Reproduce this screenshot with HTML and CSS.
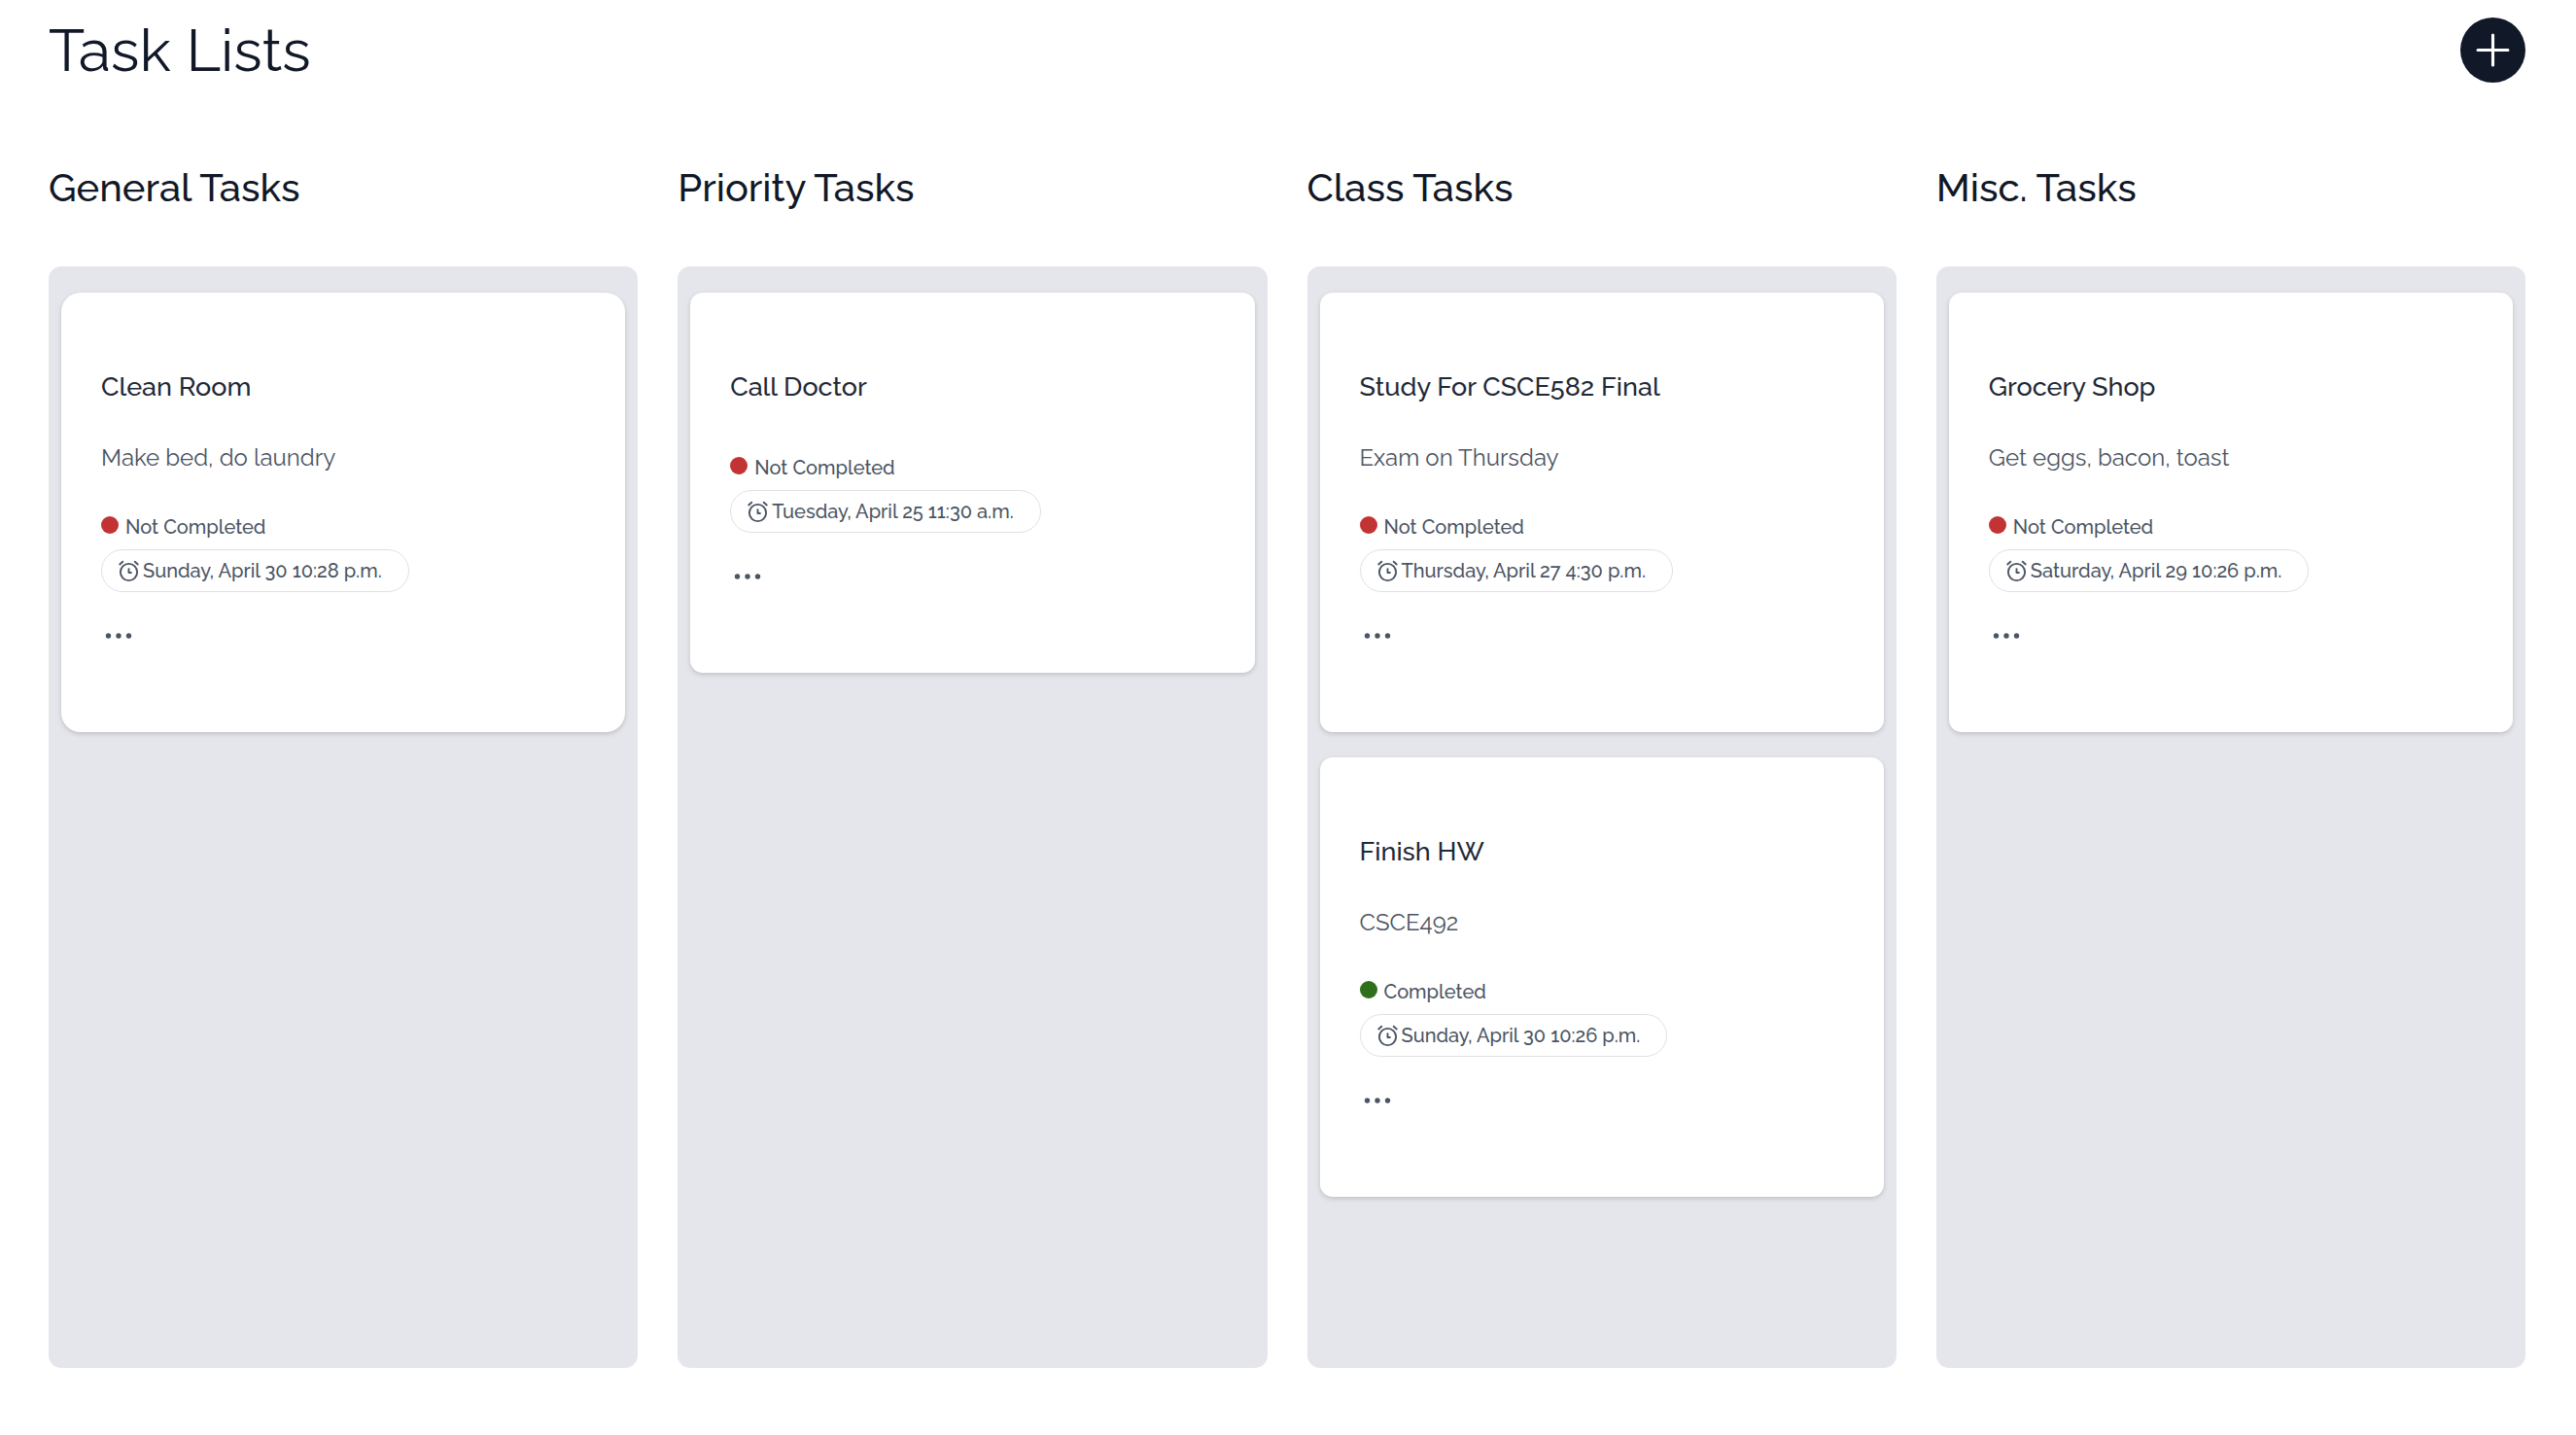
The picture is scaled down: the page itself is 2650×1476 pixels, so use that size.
FILE: index.html
```html
<!DOCTYPE html>
<html lang="en">
<head>
  <meta charset="utf-8">
  <meta name="viewport" content="width=device-width, initial-scale=1">
  <title>Task Lists</title>
  <link rel="stylesheet" href="styles.css">
</head>
<body>
  <svg class="sprite" aria-hidden="true">
    <symbol id="icon-alarm" viewBox="0 0 24 24">
      <g fill="none" stroke="currentColor" stroke-width="2" stroke-linecap="round" stroke-linejoin="round">
        <circle cx="12" cy="13" r="9"/>
        <path d="M12 9.500v4h2.500M2.300 4.600l3.200-2.800M21.700 4.600l-3.200-2.800"/>
      </g>
    </symbol>
    <symbol id="icon-dots" viewBox="0 0 36 36">
      <g fill="currentColor">
        <circle cx="7.500" cy="18" r="2.700"/>
        <circle cx="18" cy="18" r="2.700"/>
        <circle cx="28.500" cy="18" r="2.700"/>
      </g>
    </symbol>
  </svg>

  <header class="page-header">
    <h1 class="page-title">Task Lists</h1>
    <button class="add-button" type="button" aria-label="Add task">
      <svg class="add-icon" viewBox="0 0 34 34" aria-hidden="true"><path d="M17 2v30M2 17h30" fill="none" stroke="currentColor" stroke-width="3" stroke-linecap="round"/></svg>
    </button>
  </header>

  <main class="board">
    <section class="column">
      <h2 class="column-title">General Tasks</h2>
      <div class="list">
        <article class="card card-round">
          <h3 class="card-title">Clean Room</h3>
          <p class="card-text">Make bed, do laundry</p>
          <p class="status"><span class="dot dot-open"></span>Not Completed</p>
          <p class="due"><svg class="due-icon" aria-hidden="true"><use href="#icon-alarm"/></svg>Sunday, April 30 10:28 p.m.</p>
          <button class="more" type="button" aria-label="More options"><svg class="more-icon" aria-hidden="true"><use href="#icon-dots"/></svg></button>
        </article>
      </div>
    </section>

    <section class="column">
      <h2 class="column-title">Priority Tasks</h2>
      <div class="list">
        <article class="card">
          <h3 class="card-title">Call Doctor</h3>
          <p class="status"><span class="dot dot-open"></span>Not Completed</p>
          <p class="due"><svg class="due-icon" aria-hidden="true"><use href="#icon-alarm"/></svg>Tuesday, April 25 11:30 a.m.</p>
          <button class="more" type="button" aria-label="More options"><svg class="more-icon" aria-hidden="true"><use href="#icon-dots"/></svg></button>
        </article>
      </div>
    </section>

    <section class="column">
      <h2 class="column-title">Class Tasks</h2>
      <div class="list">
        <article class="card">
          <h3 class="card-title">Study For CSCE582 Final</h3>
          <p class="card-text">Exam on Thursday</p>
          <p class="status"><span class="dot dot-open"></span>Not Completed</p>
          <p class="due"><svg class="due-icon" aria-hidden="true"><use href="#icon-alarm"/></svg>Thursday, April 27 4:30 p.m.</p>
          <button class="more" type="button" aria-label="More options"><svg class="more-icon" aria-hidden="true"><use href="#icon-dots"/></svg></button>
        </article>
        <article class="card">
          <h3 class="card-title">Finish HW</h3>
          <p class="card-text">CSCE492</p>
          <p class="status"><span class="dot dot-done"></span>Completed</p>
          <p class="due"><svg class="due-icon" aria-hidden="true"><use href="#icon-alarm"/></svg>Sunday, April 30 10:26 p.m.</p>
          <button class="more" type="button" aria-label="More options"><svg class="more-icon" aria-hidden="true"><use href="#icon-dots"/></svg></button>
        </article>
      </div>
    </section>

    <section class="column">
      <h2 class="column-title">Misc. Tasks</h2>
      <div class="list">
        <article class="card">
          <h3 class="card-title">Grocery Shop</h3>
          <p class="card-text">Get eggs, bacon, toast</p>
          <p class="status"><span class="dot dot-open"></span>Not Completed</p>
          <p class="due"><svg class="due-icon" aria-hidden="true"><use href="#icon-alarm"/></svg>Saturday, April 29 10:26 p.m.</p>
          <button class="more" type="button" aria-label="More options"><svg class="more-icon" aria-hidden="true"><use href="#icon-dots"/></svg></button>
        </article>
      </div>
    </section>
  </main>
</body>
</html>
```
FILE: styles.css
```css
* {
  box-sizing: border-box;
}

body {
  display: flex;
  flex-direction: column;
  min-height: 100vh;
  margin: 0;
  padding: 18px 52px 69px 50px;
  background: #fff;
  color: #4b5563;
  font-family: Raleway, "Open Sans", "Noto Sans", sans-serif;
}

h1,
h2,
h3,
p {
  margin: 0;
  font-weight: 400;
}

button {
  padding: 0;
  border: 0;
  background: none;
  color: inherit;
  cursor: pointer;
}

.sprite {
  display: none;
}

.page-header {
  display: flex;
  align-items: center;
  justify-content: space-between;
}

.page-title {
  color: #111827;
  font-size: 61px;
  line-height: 64px;
}

.add-button {
  display: flex;
  align-items: center;
  justify-content: center;
  width: 67px;
  height: 67px;
  border-radius: 50%;
  background: #111827;
  color: #fff;
}

.add-icon {
  width: 35px;
  height: 35px;
}

.board {
  display: grid;
  flex: 1;
  grid-template-columns: repeat(4, 1fr);
  gap: 41px;
  margin-top: 84px;
}

.column {
  display: flex;
  flex-direction: column;
  gap: 57px;
}

.column-title {
  color: #111827;
  font-size: 40px;
  font-weight: 500;
  line-height: 48px;
}

.list {
  display: flex;
  flex: 1;
  flex-direction: column;
  gap: 26px;
  padding: 27px 13px;
  border-radius: 13px;
  background: #e5e6eb;
}

.card {
  display: flex;
  flex-direction: column;
  align-items: flex-start;
  padding: 77px 41px 81px;
  border-radius: 13px;
  background: #fff;
  box-shadow: 0 2px 5px rgba(0, 0, 0, 0.16);
}

.card-round {
  border-radius: 20px;
}

.card-title {
  color: #1f2937;
  font-size: 27px;
  font-weight: 500;
  line-height: 40px;
}

.card-text {
  margin-top: 35px;
  font-size: 24px;
  line-height: 36px;
}

.status {
  display: flex;
  gap: 7px;
  margin-top: 39px;
  font-size: 20px;
  font-weight: 500;
  line-height: 28px;
}

.card-title + .status {
  margin-top: 49px;
}

.dot {
  width: 18px;
  height: 18px;
  margin-top: 3px;
  border-radius: 50%;
}

.dot-open {
  background: #c23434;
}

.dot-done {
  background: #2f6f1b;
}

.due {
  display: flex;
  align-items: center;
  gap: 3px;
  height: 44px;
  margin-top: 9px;
  padding: 0 27px 0 16px;
  border: 1px solid #dfe1e6;
  border-radius: 22px;
  font-size: 20px;
  font-weight: 500;
}

.due-icon {
  width: 23px;
  height: 23px;
}

.more {
  display: flex;
  margin-top: 27px;
}

.more-icon {
  width: 36px;
  height: 36px;
}
```
